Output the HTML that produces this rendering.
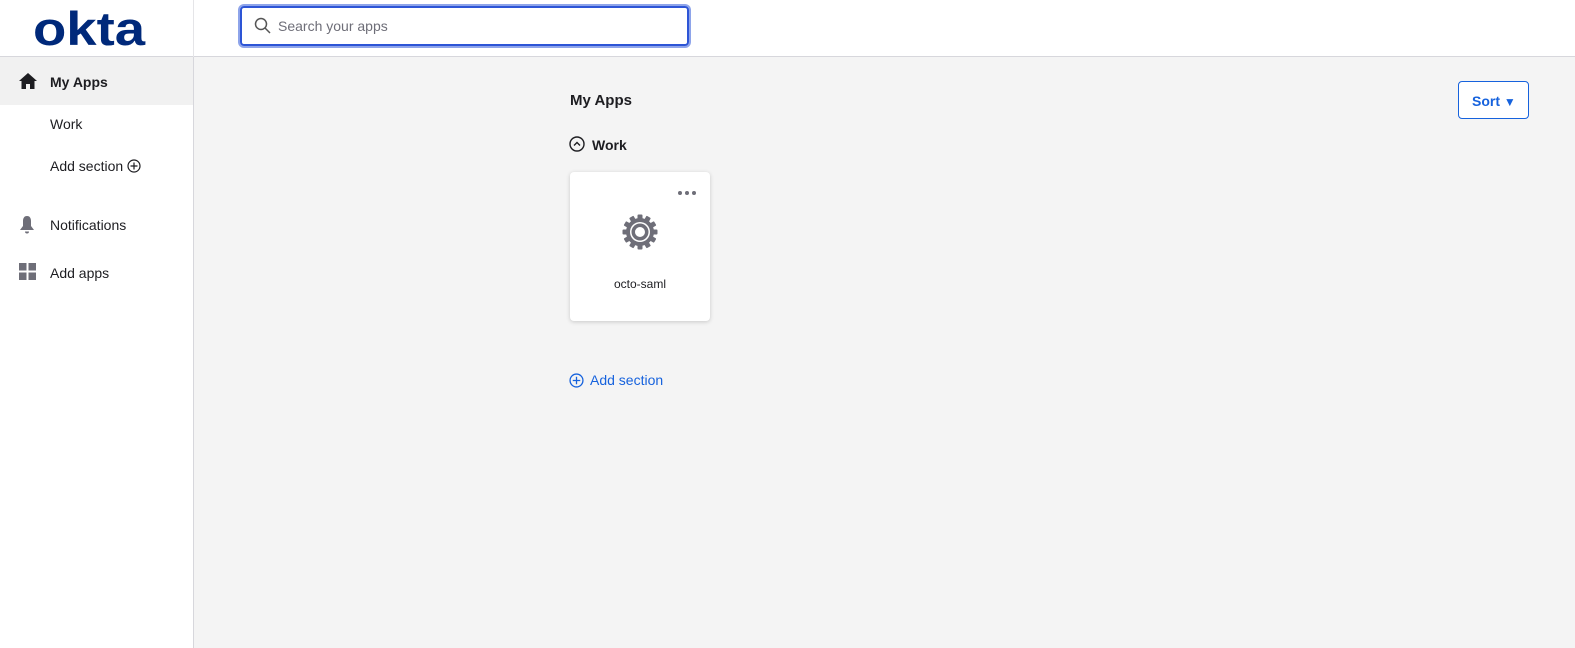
<!DOCTYPE html>
<html><head><meta charset="utf-8"><style>
*{box-sizing:border-box;margin:0;padding:0}
body{width:1575px;height:648px;overflow:hidden;font-family:"Liberation Sans",sans-serif;background:#f4f4f4;position:relative;color:#1d1d21}
.top{position:absolute;left:0;top:0;width:1575px;height:57px;background:#fff;border-bottom:1px solid #d7d7dc}
.side{position:absolute;left:0;top:57px;width:194px;height:591px;background:#fff;border-right:1px solid #d7d7dc}
.vline{position:absolute;left:193px;top:0;width:1px;height:57px;background:#e5e5e8}
.logo{position:absolute;left:33px;top:1px;font-size:47px;font-weight:bold;color:#00297a;letter-spacing:0px;transform:scaleX(1.16);transform-origin:left}
.search{position:absolute;left:240px;top:6px;width:449px;height:40px;border:2px solid #2d55d6;border-radius:4px;box-shadow:0 0 0 2px #8ea4ea}
.search span{position:absolute;left:36px;top:10px;font-size:14px;color:#6e6e78}
.nav{position:absolute;left:50px;font-size:14px}
.sort{position:absolute;left:1458px;top:81px;width:71px;height:38px;border:1px solid #1662dd;border-radius:4px;background:#fff;color:#1662dd;font-weight:bold;font-size:14px;padding:11px 0 0 13px}
.card{position:absolute;left:570px;top:172px;width:140px;height:149px;background:#fff;border-radius:4px;box-shadow:0 1px 4px rgba(0,0,0,.18)}
</style></head><body>
<div class="top"></div><div class="vline"></div>
<div class="logo">okta</div>
<div class="search"><svg style="position:absolute;left:12px;top:9px" width="18" height="18" viewBox="0 0 18 18"><circle cx="7" cy="7" r="5.5" fill="none" stroke="#555" stroke-width="1.5"/><path d="M11 11l5 5" stroke="#555" stroke-width="1.5"/></svg><span>Search your apps</span></div>
<div class="side">
<div style="position:absolute;left:0;top:0;width:193px;height:48px;background:#f1f1f1"></div>
<svg style="position:absolute;left:19px;top:16px" width="18" height="16" viewBox="0 0 18 16"><path d="M9 0L0 8h2.5v8h4.5v-5h4v5h4.5V8H18z" fill="#1d1d21"/></svg>
<div class="nav" style="top:17px;font-weight:bold">My Apps</div>
<div class="nav" style="top:59px">Work</div>
<div class="nav" style="top:101px">Add section <svg style="vertical-align:-2px" width="14" height="14" viewBox="0 0 14 14"><circle cx="7" cy="7" r="6" fill="none" stroke="#1d1d21" stroke-width="1.2"/><path d="M7 3.5v7M3.5 7h7" stroke="#1d1d21" stroke-width="1.2"/></svg></div>
<svg style="position:absolute;left:19px;top:159px" width="16" height="18" viewBox="0 0 16 18"><path d="M8 0C5 0 4 2.5 4 5v5L1 14h14l-3-4V5c0-2.5-1-5-4-5zM6 15.5h4a2 2 0 01-4 0z" fill="#6e6e78"/></svg>
<div class="nav" style="top:160px">Notifications</div>
<svg style="position:absolute;left:19px;top:206px" width="17" height="17"><rect width="7.5" height="7.5" fill="#6e6e78"/><rect x="9.5" width="7.5" height="7.5" fill="#6e6e78"/><rect y="9.5" width="7.5" height="7.5" fill="#6e6e78"/><rect x="9.5" y="9.5" width="7.5" height="7.5" fill="#6e6e78"/></svg>
<div class="nav" style="top:208px">Add apps</div>
</div>
<div style="position:absolute;left:570px;top:92px;font-size:15px;font-weight:bold">My Apps</div>
<svg style="position:absolute;left:569px;top:136px" width="16" height="16" viewBox="0 0 16 16"><circle cx="8" cy="8" r="7" fill="none" stroke="#1d1d21" stroke-width="1.4"/><path d="M5 9.5l3-3 3 3" fill="none" stroke="#1d1d21" stroke-width="1.4"/></svg>
<div style="position:absolute;left:592px;top:137px;font-size:14px;font-weight:bold">Work</div>
<div class="sort">Sort <span style="font-size:12px">▼</span></div>
<div class="card">
<div style="position:absolute;left:108px;top:19px;width:4px;height:4px;border-radius:2px;background:#6e6e78;box-shadow:7px 0 #6e6e78,14px 0 #6e6e78"></div>
<svg style="position:absolute;left:52px;top:42px" width="36" height="36" viewBox="0 0 36 36"><g fill="#6e6e78" transform="translate(18 18)"><rect x="-2.5" y="-17.5" width="5" height="35" rx="1"/><rect x="-2.5" y="-17.5" width="5" height="35" rx="1" transform="rotate(30)"/><rect x="-2.5" y="-17.5" width="5" height="35" rx="1" transform="rotate(60)"/><rect x="-2.5" y="-17.5" width="5" height="35" rx="1" transform="rotate(90)"/><rect x="-2.5" y="-17.5" width="5" height="35" rx="1" transform="rotate(120)"/><rect x="-2.5" y="-17.5" width="5" height="35" rx="1" transform="rotate(150)"/><circle r="14"/></g><circle cx="18" cy="18" r="10" fill="#fff"/><circle cx="18" cy="18" r="8.5" fill="#6e6e78"/><circle cx="18" cy="18" r="5" fill="#fff"/></svg>
<div style="position:absolute;left:0;width:140px;top:105px;text-align:center;font-size:12px">octo-saml</div>
</div>
<svg style="position:absolute;left:569px;top:373px" width="15" height="15" viewBox="0 0 14 14"><circle cx="7" cy="7" r="6" fill="none" stroke="#1662dd" stroke-width="1.2"/><path d="M7 3.5v7M3.5 7h7" stroke="#1662dd" stroke-width="1.2"/></svg>
<div style="position:absolute;left:590px;top:372px;font-size:14px;color:#1662dd">Add section</div>
</body></html>
